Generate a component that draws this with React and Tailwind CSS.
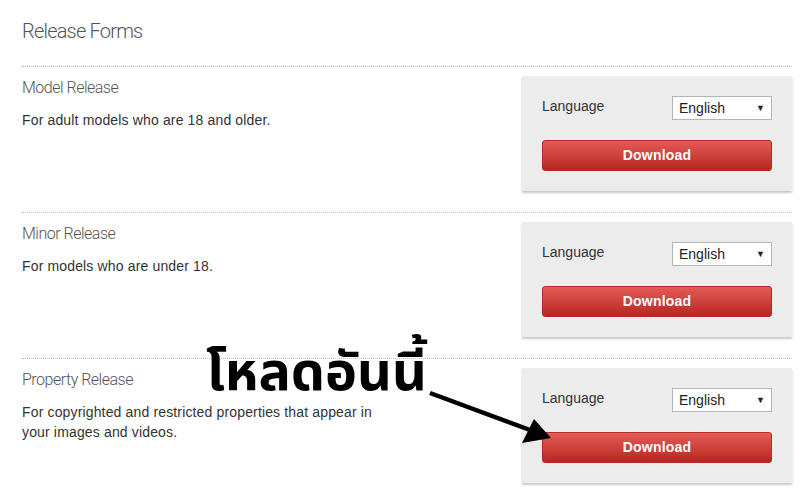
const forms = [
  { title: 'Model Release', desc: 'For adult models who are 18 and older.' },
  { title: 'Minor Release', desc: 'For models who are under 18.' },
  {
    title: 'Property Release',
    desc: 'For copyrighted and restricted properties that appear in your images and videos.',
  },
];

function DownloadBox() {
  return (
    <div className="w-[270px] h-[115px] bg-[#ececec] px-5 pt-5 shadow-[0_2px_2px_rgba(0,0,0,0.22)]">
      <div className="flex items-center justify-between h-6">
        <span className="text-[14px] text-[#333] font-['Liberation_Sans',Arial,sans-serif] mt-[-4px]">Language</span>
        <div className="relative w-[100px] h-6 bg-white border border-[#b5b5b5] flex items-center pl-[6px]">
          <span className="text-[14px] text-[#222] font-['Liberation_Sans',Arial,sans-serif]">English</span>
          <span className="absolute right-[6px] top-[5px] text-[9px] text-[#222]">▼</span>
        </div>
      </div>
      <button className="mt-5 w-[230px] h-[31px] rounded-[3px] border border-[#b32a26] bg-gradient-to-b from-[#e55a55] to-[#b82420] text-white font-bold text-[14px] tracking-[0.2px] font-['Liberation_Sans',Arial,sans-serif]">
        Download
      </button>
    </div>
  );
}

export default function App() {
  return (
    <div className="relative w-[804px] h-[496px] bg-white overflow-hidden font-['Roboto',sans-serif]">
      <div className="pl-[22px] w-[792px]">
        <h1 className="pt-[17px] text-[20px] leading-[28px] font-light tracking-[-0.8px] text-[#555]">Release Forms</h1>
        <div className="mt-[21px]">
          {forms.map((f) => (
            <div key={f.title} className="border-t border-dotted border-[#bbb] pt-[9px] pb-[21px] flex justify-between">
              <div className="w-[370px]">
                <h2 className="text-[16px] leading-6 font-light tracking-[-0.5px] text-[#555]">{f.title}</h2>
                <p className="mt-[10px] text-[14px] leading-5 tracking-[0.15px] text-[#333] font-['Liberation_Sans',Arial,sans-serif]">{f.desc}</p>
              </div>
              <DownloadBox />
            </div>
          ))}
        </div>
      </div>

      <div className="absolute left-[206px] top-[350px] text-[54px] leading-[48px] font-bold text-black font-['Noto_Sans_Thai','Noto_Sans',Tahoma,sans-serif]">
        โหลดอันนี้
      </div>
      <svg className="absolute left-0 top-0" width="804" height="496">
        <line x1="430" y1="393" x2="530" y2="430" stroke="black" strokeWidth="4.5" />
        <polygon points="551,438 522,443 534,419" fill="black" />
      </svg>
    </div>
  );
}
